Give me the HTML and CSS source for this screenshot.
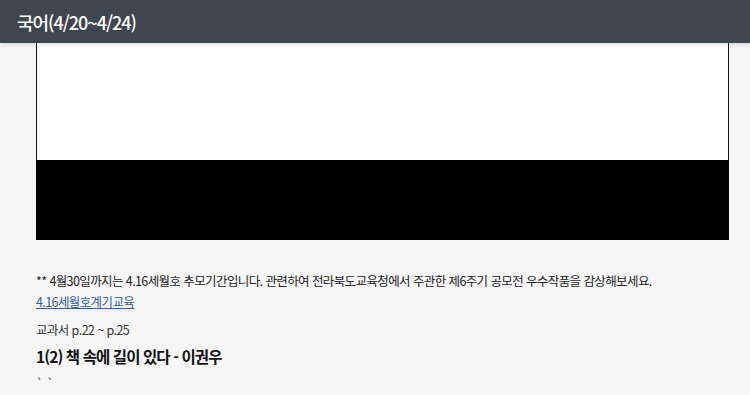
FILE: index.html
```html
<!DOCTYPE html>
<html lang="ko">
<head>
<meta charset="utf-8">
<link rel="stylesheet" href="styles.css">
</head>
<body>
<header class="topbar"><h1 class="title">국어(4/20~4/24)</h1></header>
<main class="content">
  <div class="video">
    <div class="video-top"></div>
    <div class="video-bottom"></div>
  </div>
  <p class="notice">** 4월30일까지는 4.16세월호 추모기간입니다. 관련하여 전라북도교육청에서 주관한 제6주기 공모전 우수작품을 감상해보세요.<br><a class="link" href="#">4.16세월호계기교육</a></p>
  <p class="pages">교과서 p.22 ~ p.25</p>
  <h2 class="lesson">1(2) 책 속에 길이 있다 - 이권우</h2>
  <p class="ticks">` `</p>
</main>
</body>
</html>
```
FILE: styles.css
```css
html, body {
  margin: 0;
  padding: 0;
  background: #f6f6f6;
  font-family: "Noto Sans CJK KR", "Noto Sans", sans-serif;
  color: #222;
  overflow: hidden;
}
.topbar {
  height: 43px;
  background: #3f4650;
  box-shadow: 0 2px 4px rgba(0,0,0,0.12);
  display: flex;
  align-items: center;
  padding-left: 17px;
  position: relative;
  z-index: 2;
}
.title {
  margin: 0;
  color: #fff;
  font-size: 18px;
  font-weight: 500;
  letter-spacing: -1px;
}
.content {
  margin-left: 36px;
  width: 693px;
}
.video-top {
  height: 117px;
  background: #fff;
  border-left: 1px solid #111;
  border-right: 1px solid #111;
}
.video-bottom {
  height: 80px;
  background: #000;
}
.notice {
  margin: 30px 0 0;
  font-size: 12.5px;
  line-height: 21px;
  letter-spacing: -0.6px;
  color: #222;
}
.link {
  color: #2f5fa8;
  text-decoration: underline;
}
.pages {
  margin: 8px 0 0;
  font-size: 12.5px;
  line-height: 20px;
  letter-spacing: -0.6px;
  color: #333;
}
.lesson {
  margin: 4px 0 0;
  font-size: 15.5px;
  line-height: 24px;
  font-weight: 700;
  letter-spacing: -0.9px;
  color: #111;
}
.ticks {
  margin: 8px 0 0;
  font-size: 12px;
  line-height: 14px;
  color: #444;
}
```
